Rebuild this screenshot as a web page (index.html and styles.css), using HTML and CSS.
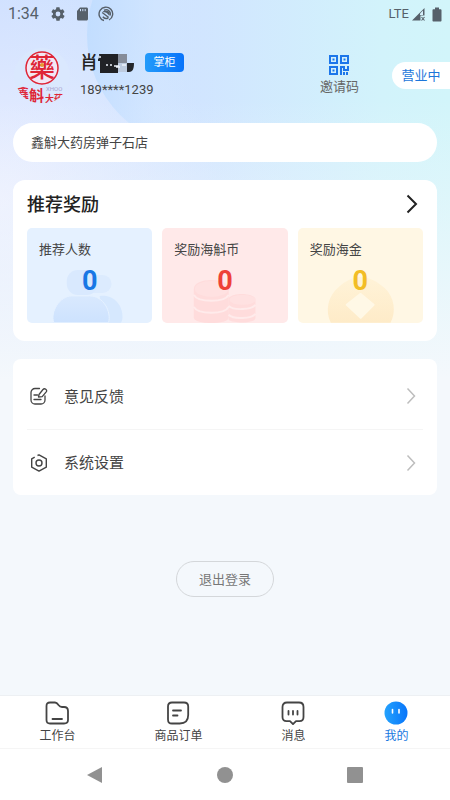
FILE: index.html
```html
<!DOCTYPE html>
<html lang="zh-CN">
<head>
    <meta charset="UTF-8">
    <meta name="viewport" content="width=device-width, initial-scale=1.0">
    <title>我的</title>
    <link rel="stylesheet" href="styles.css">
</head>

<body>
    <div class="app">
        <!-- Decorative circle behind the header -->
        <div class="bg-circle"></div>

        <!-- Status bar -->
        <div class="status-bar">
            <span class="clock">1:34</span>
            <div class="status-icons">
                <svg width="16" height="16" viewBox="0 0 24 24" fill="#56606a"><path d="M19.4 13a7.500 7.500 0 0 0 0-2l2.100-1.700a.5.5 0 0 0 .1-.6l-2-3.500a.5.5 0 0 0-.6-.2l-2.500 1a7.300 7.300 0 0 0-1.700-1l-.4-2.600a.5.5 0 0 0-.5-.4h-4a.5.5 0 0 0-.5.4L9 5a7.300 7.300 0 0 0-1.700 1L4.900 5a.5.5 0 0 0-.6.2l-2 3.500a.5.5 0 0 0 .1.600L4.500 11a7.500 7.500 0 0 0 0 2l-2.100 1.700a.5.5 0 0 0-.1.600l2 3.500c.1.200.4.300.6.200l2.500-1c.5.400 1.100.7 1.700 1l.4 2.600c0 .2.2.4.5.4h4c.3 0 .5-.2.5-.4l.4-2.600a7.300 7.300 0 0 0 1.700-1l2.500 1c.2.100.5 0 .6-.2l2-3.500a.5.5 0 0 0-.1-.6zM12 15.600a3.600 3.600 0 1 1 0-7.200 3.600 3.600 0 0 1 0 7.200z"/></svg>
                <svg width="16" height="16" viewBox="0 0 16 16"><path d="M6 1.500h6.500c.8 0 1.500.7 1.500 1.500v10c0 .8-.7 1.500-1.500 1.500h-8A1.500 1.500 0 0 1 3 13V5z" fill="#56606a"/><path d="M6.500 3v2.200M8.800 3v2.200M11.200 3v2.200" stroke="#cfe0fb" stroke-width="1"/></svg>
                <svg width="16" height="16" viewBox="0 0 16 16" fill="none" stroke="#56606a"><path d="M6 14.500A6.800 6.800 0 1 1 11 14" stroke-width="1.400"/><path d="M4.800 10.800a4.200 4.200 0 0 0 5.500 1M12 9.500A4.200 4.200 0 0 0 6 4.300M4.200 6.500l6.500 5" stroke-width="1.400"/><path d="M4.500 6c2-2.300 6-2 7 .8.300.9.200 2-.3 2.900C9.500 7 7.500 6 4.500 6z" fill="#56606a" stroke="none"/></svg>
            </div>
            <span class="network">LTE</span>
            <svg width="15" height="15" viewBox="0 0 15 15"><path d="M1 13.500 13.500 1v7.500h-4v5z" fill="#56606a"/><path d="M9 8V6.500L12 3.500V8z" fill="#d5f0fb"/><path d="m10.500 10 3 3.500m0-3.500-3 3.500" stroke="#56606a" stroke-width="1.100"/></svg>
            <svg class="battery" width="10" height="15" viewBox="0 0 10 15"><path d="M3 .5h4v1.700h1.500c.5 0 1 .4 1 1v10.300c0 .6-.4 1-1 1h-7c-.6 0-1-.4-1-1V3.200c0-.6.400-1 1-1H3z" fill="#56606a"/></svg>
        </div>

        <!-- User header -->
        <header class="profile">
            <svg class="avatar" viewBox="0 0 58 58" role="img" aria-label="鑫斛大药房">
                <defs><clipPath id="avatar-clip"><circle cx="29" cy="29" r="28"/></clipPath></defs>
                <circle cx="29" cy="29" r="28" fill="#dae8fe"/>
                <g clip-path="url(#avatar-clip)" fill="#df2536">
                    <circle cx="29" cy="21" r="16" fill="#f2e7f4" stroke="#df2536" stroke-width="1.500"/>
                    <text class="logo-main" x="29" y="30" text-anchor="middle">藥</text>
                    <circle cx="29" cy="18" r="2" fill="#e69a32"/>
                    <text class="logo-name" x="4" y="51">鑫</text>
                    <text class="logo-large" x="16" y="54">斛</text>
                    <text class="logo-small" x="32" y="55">大药</text>
                    <text class="logo-latin" x="33" y="44">XHOO</text>
                </g>
            </svg>
            <div class="user">
                <div class="user-name">
                    <span>肖</span>
                    <svg class="mask" width="37" height="20" viewBox="0 0 37 20"><path d="M0 4 4 1v3L1 7z" fill="#252a30"/><path d="M1 1h19v19H2V8H0V6h2z" fill="#202226"/><path d="M20 1h9v9h-9z" fill="#858c99"/><path d="M20 10h9v9h-9z" fill="#bdcbdf"/><path d="M29 10h7c0 5-1 9-5 9h-2z" fill="#24272c"/><path d="M0 4h3M8 12h2m2 0h2m2 1h5m-3 1h4m2-2h4" stroke="#edf3fb" stroke-width="1.300"/></svg>
                    <span class="badge">掌柜</span>
                </div>
                <div class="phone">189****1239</div>
            </div>
            <button class="invite" type="button">
                <svg width="20" height="20" viewBox="0 0 20 20" fill="none" stroke="#1c76ea" stroke-width="2"><path d="M1 1h7v7H1zM12 1h7v7h-7zM1 12h7v7H1z"/><path d="M3.500 4.500h2M14.500 4.500h2M3.500 15.500h2M12 20v-8h3v3h4v-4M15 17v3M18 17v3"/></svg>
                <span>邀请码</span>
            </button>
            <button class="open-state" type="button">营业中</button>
        </header>

        <main class="content">
            <div class="store">鑫斛大药房弹子石店</div>

            <!-- Rewards -->
            <section class="card rewards">
                <a class="rewards-head" href="#">
                    <h2>推荐奖励</h2>
                    <svg width="12" height="20" viewBox="0 0 12 20" fill="none" stroke="#222" stroke-width="2"><path d="m1.500 1.500 8.500 8.500-8.500 8.500"/></svg>
                </a>
                <div class="reward-list">
                    <div class="reward blue">
                        <svg class="reward-art" viewBox="0 0 126 95">
                            <defs><linearGradient id="people" x2="0" y2="1"><stop stop-color="#d9e9fe"/><stop offset="1" stop-color="#cde2fe"/></linearGradient></defs>
                            <rect x="55" y="47" width="30" height="18" rx="9" fill="#dcebfe"/>
                            <rect x="40" y="42" width="31" height="25" rx="11" fill="#d9e9fe"/>
                            <path d="M73 68c14-2 23 9 23 21 0 3-1 6-2 6H78z" fill="#d6e8fe"/>
                            <path d="M27 95c-4-11 6-27 18-27h18c14 0 22 16 19 27z" fill="url(#people)" stroke="#e5f1ff"/>
                        </svg>
                        <span>推荐人数</span>
                        <strong>0</strong>
                    </div>
                    <div class="reward red">
                        <svg class="reward-art" viewBox="0 0 126 95">
                            <path d="M32 61c0-12 35-12 35 0v29c0 7-35 7-35 0z" fill="#ffdcdc"/>
                            <path d="M67 70c5-6 27-5 27 2v18c0 6-22 6-27 2z" fill="#ffdcdc"/>
                            <g fill="none" stroke="#ffebeb" stroke-width="2">
                                <path d="M32 67c4 8 31 8 35 0M32 79c4 8 31 8 35 0M67 78c5 5 23 4 27-1M67 87c5 5 23 4 27-1"/>
                            </g>
                            <ellipse cx="50" cy="61" rx="17" ry="8" fill="#ffe1e1"/>
                            <ellipse cx="81" cy="72" rx="13" ry="5" fill="#ffe1e1"/>
                        </svg>
                        <span>奖励海斛币</span>
                        <strong>0</strong>
                    </div>
                    <div class="reward gold">
                        <svg class="reward-art" viewBox="0 0 126 95">
                            <defs><linearGradient id="gold" x2="0" y2="1"><stop stop-color="#fff3d8"/><stop offset="1" stop-color="#feebc8"/></linearGradient></defs>
                            <path d="M33 95c-6-12-3-27 8-36 7-6 14-10 22-10 9 0 17 5 24 11 10 9 12 24 6 35z" fill="url(#gold)"/>
                            <path d="m63 66 13 11-13 13-14-13z" fill="#fff8e6" stroke="#fff8e6" stroke-width="2" stroke-linejoin="round"/>
                        </svg>
                        <span>奖励海金</span>
                        <strong>0</strong>
                    </div>
                </div>
            </section>

            <!-- Menu -->
            <nav class="card menu">
                <a class="menu-item" href="#">
                    <svg width="18" height="18" viewBox="0 0 18 18" fill="none" stroke="#444" stroke-width="1.300" stroke-linecap="round" stroke-linejoin="round"><path d="M9.500 1.500H5a4 4 0 0 0-4 4V13a4 4 0 0 0 4 4h6a4 4 0 0 0 4-4V9M4 8h3.500M4 12.500h7"/><path d="m9 7.500 4-5c1.600-1.900 4.700.3 3.200 2.400l-4 4.800-3.700.3z"/></svg>
                    <span>意见反馈</span>
                    <svg class="arrow" width="10" height="18" viewBox="0 0 10 18"><path d="m1.500 1.500 7 7.500-7 7.500"/></svg>
                </a>
                <a class="menu-item" href="#">
                    <svg width="18" height="18" viewBox="0 0 18 18" fill="none" stroke="#444" stroke-width="1.400" stroke-linejoin="round"><path d="m7.500 1.500 1.500-.6 7.300 3.900v8.400L9 17.100l-7.300-3.900V4.800l3-1.700"/><circle cx="9" cy="9" r="3"/></svg>
                    <span>系统设置</span>
                    <svg class="arrow" width="10" height="18" viewBox="0 0 10 18"><path d="m1.500 1.500 7 7.500-7 7.500"/></svg>
                </a>
            </nav>

            <button class="logout" type="button">退出登录</button>
        </main>

        <!-- Bottom tabs -->
        <nav class="tabs">
            <a class="tab" href="#">
                <svg width="24" height="24" viewBox="0 0 24 24"><path d="M5 1.500h5c2 0 2.500 1 3.500 2.500 1 1.400 1.600 2 3.500 2h2c2.500 0 4 1.500 4 4v9c0 2.500-1.500 3.500-4 3.500H5c-2.500 0-3.500-1.200-3.500-3.500V5c0-2.300 1-3.500 3.500-3.500zM7.500 18H17"/></svg>
                <span>工作台</span>
            </a>
            <a class="tab" href="#">
                <svg width="24" height="24" viewBox="0 0 24 24"><path d="M6 1.500h12c2.800 0 4.200 1.300 4.200 4V14c0 5.500-3 8.500-8.500 8.500H6c-2.800 0-4-1.300-4-4v-13c0-2.700 1.200-4 4-4zM7 9.500h8M7 14.500h4.500"/></svg>
                <span>商品订单</span>
            </a>
            <a class="tab" href="#">
                <svg width="24" height="24" viewBox="0 0 24 24"><path d="M6 1.500h12c3 0 4.500 1.500 4.500 4.500v10c0 3-1.500 4.200-4 4.200H15l-3 3-3-3H5.500c-2.500 0-4-1.200-4-4.200V6C1.500 3 3 1.500 6 1.500zM7.500 10v3.500M12 10v3.500M16.500 10v3.500"/></svg>
                <span>消息</span>
            </a>
            <a class="tab active" href="#">
                <svg width="24" height="24" viewBox="0 0 24 24"><defs><linearGradient id="face"><stop stop-color="#24a2fd"/><stop offset="1" stop-color="#0875fa"/></linearGradient></defs><circle cx="12" cy="12" r="11.500" fill="url(#face)"/><path d="M8.500 8.500v3.500M15 8.500v3.500" stroke="#fff" stroke-width="1.600"/></svg>
                <span>我的</span>
            </a>
        </nav>

        <!-- System navigation -->
        <div class="system-nav">
            <button type="button" aria-label="返回"><svg width="18" height="18" viewBox="0 0 18 18"><path d="M16 1v16L1 9z"/></svg></button>
            <button type="button" aria-label="主页"><svg width="18" height="18" viewBox="0 0 18 18"><circle cx="9" cy="9" r="8"/></svg></button>
            <button type="button" aria-label="最近任务"><svg width="18" height="18" viewBox="0 0 18 18"><rect x="1" y="1" width="16" height="16" rx="1"/></svg></button>
        </div>
    </div>
</body>
</html>
```
FILE: styles.css
```css
* {
    box-sizing: border-box;
}

body {
    margin: 0;
    font-family: Roboto, "Noto Sans CJK SC", sans-serif;
    font-size: 13px;
    line-height: 20px;
    color: #444;
    background-color: #f4f8fc;
}

a {
    color: inherit;
    text-decoration: none;
}

button {
    padding: 0;
    border: 0;
    background: none;
    font: inherit;
    color: inherit;
    cursor: pointer;
}

.app {
    position: relative;
    display: flex;
    flex-direction: column;
    min-height: 100vh;
    overflow: hidden;
    background:
        linear-gradient(to bottom, rgba(244, 248, 252, 0) 100px, #f4f8fc 380px),
        radial-gradient(circle at 0 200px, #ebefff, rgba(235, 239, 255, 0) 220px),
        linear-gradient(to right, #cfe0ff 0%, #d1e5ff 45%, #d2f3fb 85%, #d2f5fa 100%);
}

.bg-circle {
    position: absolute;
    top: -78px;
    left: 87px;
    width: 226px;
    height: 226px;
    border-radius: 50%;
    background: linear-gradient(to right, rgba(190, 220, 255, 0.8), rgba(208, 230, 255, 0.5) 30%, rgba(210, 236, 255, 0) 60%);
}

/* Everything else sits above the decorative circle */
.status-bar,
.profile,
.content {
    position: relative;
}

.status-bar {
    display: flex;
    align-items: center;
    height: 28px;
    padding: 0 8px;
    color: #56606a;
}

.clock {
    font-size: 16px;
}

.status-icons {
    display: flex;
    flex: 1;
    gap: 8px;
    padding-left: 11px;
}

.network {
    margin-right: 2px;
}

.battery {
    margin-left: 6px;
}

.profile {
    display: flex;
    align-items: center;
    height: 95px;
    padding-left: 13px;
}

.avatar {
    width: 58px;
    height: 58px;
}

.logo-main {
    font-size: 26px;
    font-weight: 500;
}

.logo-large {
    font-size: 15px;
    font-weight: 700;
}

.logo-name {
    font-size: 12px;
    font-weight: 700;
}

.logo-small {
    font-size: 9px;
    font-weight: 700;
}

.logo-latin {
    font-size: 6px;
    fill: #a8a3cf;
}

.user {
    flex: 1;
    padding-left: 9px;
}

.user-name {
    display: flex;
    align-items: center;
    height: 26px;
    font-size: 18px;
    font-weight: 500;
    color: #222;
}

.badge {
    width: 39px;
    margin-left: 10px;
    border-radius: 4px;
    background: linear-gradient(to right, #239bfa, #0873fa);
    font-size: 11px;
    font-weight: 400;
    line-height: 19px;
    text-align: center;
    color: #fff;
}

.phone {
    height: 26px;
    line-height: 28px;
}

.invite {
    display: flex;
    flex-direction: column;
    align-items: center;
    gap: 2px;
    margin-right: 33px;
    color: #666;
}

.open-state {
    width: 58px;
    border-radius: 14px 0 0 14px;
    background-color: #fff;
    line-height: 27px;
    color: #1c76da;
}

.content {
    display: flex;
    flex: 1;
    flex-direction: column;
    gap: 18px;
    padding: 0 13px;
}

.store {
    padding: 1px 18px 0;
    border-radius: 20px;
    background-color: #fff;
    line-height: 38px;
}

.card {
    border-radius: 12px;
    background-color: #fff;
}

.rewards {
    padding: 0 14px 18px;
}

.rewards-head {
    display: flex;
    align-items: center;
    justify-content: space-between;
    height: 48px;
    padding-right: 5px;
}

.rewards-head h2 {
    margin: 0;
    padding-top: 2px;
    font-size: 18px;
    font-weight: 500;
    color: #222;
}

.reward-list {
    display: grid;
    grid-template-columns: repeat(3, 1fr);
    gap: 10px;
}

.reward {
    position: relative;
    display: flex;
    flex-direction: column;
    height: 95px;
    padding: 12px;
    border-radius: 5px;
    overflow: hidden;
}

.reward-art {
    position: absolute;
    bottom: 0;
    left: 0;
    width: 100%;
    height: 95px;
}

.reward span,
.reward strong {
    position: relative;
}

.reward strong {
    font-size: 27px;
    line-height: 42px;
    text-align: center;
}

.blue {
    background-color: #e5f1ff;
}

.blue strong {
    color: #1877e5;
}

.red {
    background-color: #ffe9e9;
}

.red strong {
    color: #ee4138;
}

.gold {
    background-color: #fff7e4;
}

.gold strong {
    color: #f2bd25;
}

.menu {
    padding: 4px 14px 0;
    border-radius: 8px;
}

.menu-item {
    display: flex;
    align-items: center;
    height: 66px;
    padding: 0 7px 0 3px;
    font-size: 15px;
}

.menu-item + .menu-item {
    border-top: 1px solid #f5f5f5;
}

.menu-item span {
    flex: 1;
    padding: 1px 0 0 16px;
}

.arrow {
    fill: none;
    stroke: #bdbdbd;
    stroke-width: 1.5px;
}

.logout {
    align-self: center;
    width: 98px;
    height: 36px;
    margin: 48px 0;
    padding-top: 1px;
    border: 1px solid #d4d7da;
    border-radius: 18px;
    color: #777;
}

.tabs {
    display: flex;
    justify-content: space-around;
    height: 53px;
    padding: 5px 2px 0 0;
    border-top: 1px solid #edf0f3;
    background-color: #fff;
}

.tab {
    display: flex;
    flex-direction: column;
    align-items: center;
    font-size: 12px;
    line-height: 22px;
}

.tab svg {
    fill: none;
    stroke: #444;
    stroke-width: 1.8px;
    stroke-linecap: round;
    stroke-linejoin: round;
}

.tab.active {
    color: #1878df;
}

.tab.active svg {
    stroke: none;
}

.system-nav {
    display: flex;
    justify-content: center;
    gap: 112px;
    height: 52px;
    border-top: 1px solid #f5f5f5;
    background-color: #fff;
}

.system-nav svg {
    display: block;
    fill: #919191;
}
```
